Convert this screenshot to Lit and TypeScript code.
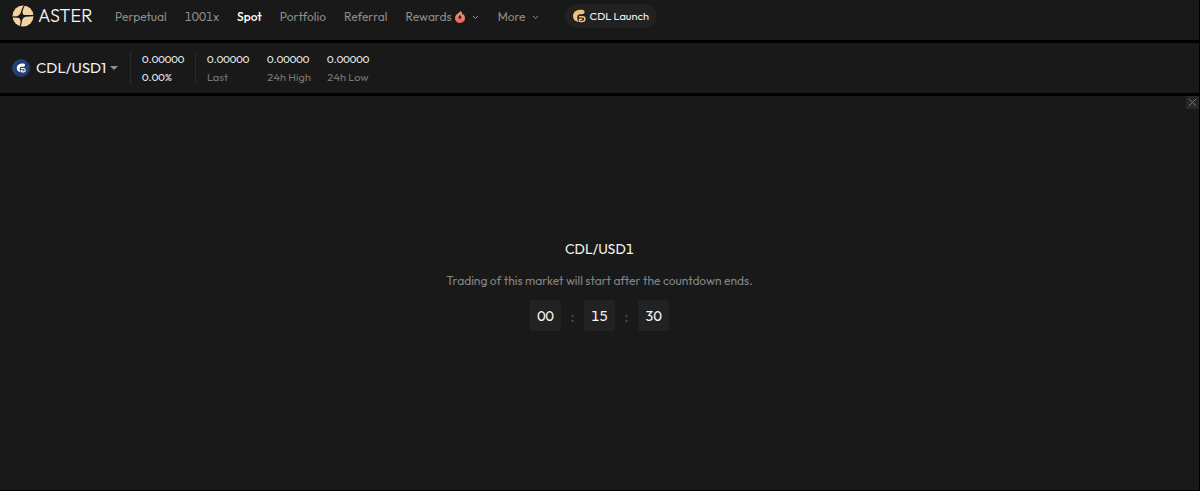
import { LitElement, html, css, svg } from "lit";
import { customElement, property, state } from "lit/decorators.js";
import { classMap } from "lit/directives/class-map.js";

interface NavItem {
  label: string;
  active?: boolean;
  hot?: boolean;
  menu?: boolean;
}

const NAV: NavItem[] = [
  { label: "Perpetual" },
  { label: "1001x" },
  { label: "Spot", active: true },
  { label: "Portfolio" },
  { label: "Referral" },
  { label: "Rewards", hot: true, menu: true },
  { label: "More", menu: true },
];

const coinMark = svg`
  <path fill="currentColor" d="M11.600 1.200C10.500.7 8.500.6 6.500.9 3.200 1.400 1 3.900 1 7.100c0 3.200 2.200 5.600 5.600 5.900-.8-.7-1.200-1.600-1.100-2.600L5.300 8.700c-.2-1.700.6-3.200 2.300-3.400 2 0 4 .1 4.700-1.200.5-1.100.3-2.400-.7-2.900z"/>
  <path fill="none" stroke="currentColor" stroke-width="1.500" d="M7 7.800h3.600a2.300 2.300 0 0 1 0 4.600H8.300a1.100 1.100 0 0 1 0-2.200h2"/>`;

@customElement("aster-nav")
export class AsterNav extends LitElement {
  static styles = css`
    :host { display: block; background: #191919; }
    .bar { display: flex; align-items: center; height: 32px; padding: 0 12px 8px; }
    a { color: inherit; text-decoration: none; }
    .brand { display: flex; align-items: center; gap: 4px; width: 81px; margin-right: 22px; color: #f5f5f5; font-size: 18px; font-weight: 300; line-height: 22px; }
    .links { display: flex; align-items: center; gap: 18px; list-style: none; margin: 0; padding: 1px 0 0; color: #8c8c8c; font-size: 12px; line-height: 16px; }
    .link { display: flex; align-items: center; white-space: nowrap; }
    .button { display: flex; align-items: center; padding: 0; border: 0; background: none; color: inherit; font: inherit; cursor: pointer; }
    .active { color: #fff; font-weight: 500; }
    .flame { margin-left: 2px; }
    .chevron { margin-left: 5px; }
    .pill { display: flex; align-items: center; gap: 4px; height: 24px; padding: 0 8px 0 7px; margin-left: 25px; border-radius: 12px; background: #212121; color: #f0f0f0; font-size: 11px; white-space: nowrap; }
    .mark { color: #efbf84; }
    svg { display: block; flex: none; }
  `;

  private renderItem(item: NavItem) {
    const cls = classMap({ link: true, active: !!item.active });
    if (!item.menu) return html`<li><a class=${cls} href="#">${item.label}</a></li>`;
    return html`<li><button class="button" type="button" aria-haspopup="true">${item.label}${item.hot
        ? html`<svg class="flame" width="12" height="14" viewBox="0 0 12 14" aria-hidden="true">
            <defs><linearGradient id="fire" x1="0" y1="0" x2="0" y2="1"><stop offset="0" stop-color="#f2a56f"/><stop offset="1" stop-color="#ee5864"/></linearGradient></defs>
            <path fill="url(#fire)" d="M6.200 1c2 1.300 2.300 2.800 2.200 4.200.5-.3.700-.7.800-1.200C10.400 5.300 11 6.700 11 8.300 11 11 8.800 13 6 13S1 11 1 8.400c0-1.900 1-3.300 2.300-4.300C4.900 3 6 2.300 6.200 1z"/>
            <path fill="#35211f" d="M6.200 4.200c-.2 1.200-1.800 2-1.800 3.300 0 .8.700 1.300 1.500 1.300s1.500-.5 1.500-1.300c0-.6-.3-1-.6-1.500-.4-.5-.6-1-.6-1.800z"/>
          </svg>`
        : ""}<svg class="chevron" width="9" height="8" viewBox="0 0 9 8" aria-hidden="true"><path d="M2 3l2.500 2.500L7 3" fill="none" stroke="#909090" stroke-width="1"/></svg></button></li>`;
  }

  render() {
    return html`<header class="bar">
      <a class="brand" href="#">
        <svg width="22" height="22" viewBox="0 0 22 22" aria-hidden="true">
          <circle cx="11" cy="11" r="10.500" fill="#f3d3a4"/>
          <path fill="#191919" d="M13 0c-1.700 3.600-2.400 5.800-2.500 7.400.1 1.700 1 2.500 2.700 2.700L22 10v1.200l-8 .5c-2.300.4-3.500 1.700-3.900 3.900C9.800 18 9.300 20 8.500 22l-1-.3c.9-2.700 1.200-4.600 1-6.200-.3-1.600-1.200-2.500-2.700-2.700L0 12.600v-1.200l4.700-.2c2-.4 3.300-1.500 3.900-3.400C9.500 4.900 10.500 2.500 12 0z"/>
        </svg>
        <span>ASTER</span>
      </a>
      <nav aria-label="Main"><ul class="links">${NAV.map((i) => this.renderItem(i))}</ul></nav>
      <a class="pill" href="#">
        <svg class="mark" width="14" height="14" viewBox="0 0 14 14" aria-hidden="true">${coinMark}</svg>
        CDL Launch
      </a>
    </header>`;
  }
}

@customElement("market-bar")
export class MarketBar extends LitElement {
  @property() pair = "";
  @state() private stats = ["Last", "24h High", "24h Low"];

  static styles = css`
    :host { display: block; background: #191919; }
    .bar { display: flex; align-items: center; height: 50px; padding: 0 12px; }
    .pair { display: flex; align-items: center; width: 107px; padding: 0; border: 0; background: none; color: #f2f2f2; font: inherit; font-size: 15px; line-height: 20px; font-variant-numeric: normal; white-space: nowrap; cursor: pointer; }
    .coin { display: grid; place-items: center; width: 18px; height: 18px; margin-right: 6px; border-radius: 50%; background: #233f73; color: #fff; }
    .caret { margin-left: 4px; }
    svg { display: block; flex: none; }
    .price, .stats { display: flex; align-items: center; height: 32px; margin: 0; border-left: 1px solid #2a2a2a; font-size: 11px; line-height: 18px; color: #ededed; }
    .price { flex-direction: column; align-items: flex-start; justify-content: center; width: 53px; margin-left: 11px; padding-left: 11px; }
    .stats { padding-left: 11px; }
    .stat { display: flex; flex-direction: column-reverse; width: 60px; }
    .label { color: #777; }
    .value { margin: 0; }
  `;

  render() {
    return html`<section class="bar">
      <button class="pair" type="button" aria-haspopup="listbox">
        <span class="coin"><svg width="10" height="10" viewBox="0 0 14 14" aria-hidden="true">${coinMark}</svg></span>
        ${this.pair}
        <svg class="caret" width="8" height="5" viewBox="0 0 8 5" aria-hidden="true"><path d="M0 0h8L4 4z" fill="#929292"/></svg>
      </button>
      <div class="price"><span>0.00000</span><span>0.00%</span></div>
      <dl class="stats">${this.stats.map((s) => html`<div class="stat"><dt class="label">${s}</dt><dd class="value">0.00000</dd></div>`)}</dl>
    </section>`;
  }
}

@customElement("market-countdown")
export class MarketCountdown extends LitElement {
  @property() pair = "";
  @state() private parts = ["00", "15", "30"];

  static styles = css`
    :host { display: flex; flex-direction: column; background: #191919; }
    .close { display: grid; place-items: center; align-self: flex-end; width: 13px; height: 13px; padding: 0; border: 0; background: #272727; color: #777; cursor: pointer; }
    .body { flex: 1; display: flex; flex-direction: column; align-items: center; justify-content: center; padding: 0 16px 29px; }
    .title { margin: 0; color: #f2f2f2; font-size: 14px; line-height: 20px; font-weight: 400; }
    .text { margin: 13px 0 10px; color: #858585; font-size: 12px; line-height: 18px; text-align: center; }
    .clock { display: flex; align-items: center; color: #4a4a4a; font-size: 14px; line-height: 20px; }
    .unit { display: grid; place-items: center; width: 31px; height: 31px; border-radius: 2px; background: #222; color: #f5f5f5; }
    .colon { width: 23px; font-size: 16px; text-align: center; }
  `;

  render() {
    return html`
      <button class="close" type="button" aria-label="Close"><svg width="9" height="9" viewBox="0 0 9 9" aria-hidden="true"><path d="M1 1l7 7M8 1L1 8" stroke="currentColor" stroke-width="1"/></svg></button>
      <div class="body">
        <h1 class="title">${this.pair}</h1>
        <p class="text">Trading of this market will start after the countdown ends.</p>
        <div class="clock" role="timer">${this.parts.map((p, i) => html`${i ? html`<span class="colon">:</span>` : ""}<span class="unit">${p}</span>`)}</div>
      </div>`;
  }
}

@customElement("app-root")
export class AppRoot extends LitElement {
  static styles = css`
    :host { display: flex; flex-direction: column; gap: 3px; box-sizing: border-box; min-height: 100vh; border-right: 1px solid #000; border-bottom: 1px solid #000; background: #000; font-family: Outfit, Lato, sans-serif; font-variant-numeric: tabular-nums; }
    .main { flex: 1; }
  `;

  render() {
    return html`
      <aster-nav></aster-nav>
      <market-bar pair="CDL/USD1"></market-bar>
      <market-countdown class="main" pair="CDL/USD1"></market-countdown>`;
  }
}
